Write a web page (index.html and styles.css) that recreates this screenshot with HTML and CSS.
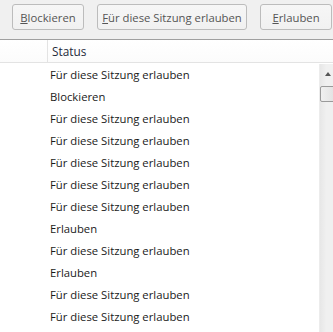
FILE: index.html
```html
<!DOCTYPE html>
<html lang="de">
<head>
  <meta charset="UTF-8">
  <title>Ausnahmen</title>
  <link rel="stylesheet" href="styles.css">
</head>
<body>
  <div class="toolbar">
    <button class="btn btn-short"><u>B</u>lockieren</button>
    <button class="btn btn-wide"><u>F</u>ür diese Sitzung erlauben</button>
    <button class="btn btn-short"><u>E</u>rlauben</button>
  </div>

  <div class="table">
    <div class="table-head">
      <div class="col-site"></div>
      <div class="col-status">Status</div>
    </div>
    <div class="table-body">
      <ul class="rows">
        <li>Für diese Sitzung erlauben</li>
        <li>Blockieren</li>
        <li>Für diese Sitzung erlauben</li>
        <li>Für diese Sitzung erlauben</li>
        <li>Für diese Sitzung erlauben</li>
        <li>Für diese Sitzung erlauben</li>
        <li>Für diese Sitzung erlauben</li>
        <li>Erlauben</li>
        <li>Für diese Sitzung erlauben</li>
        <li>Erlauben</li>
        <li>Für diese Sitzung erlauben</li>
        <li>Für diese Sitzung erlauben</li>
      </ul>
      <div class="scrollbar">
        <div class="arrow-up"></div>
        <div class="thumb"></div>
      </div>
    </div>
  </div>
</body>
</html>
```

FILE: styles.css
```css
* {
  margin: 0;
  padding: 0;
  box-sizing: border-box;
}

html, body {
  overflow: hidden;
}

body {
  font-family: 'Open Sans', 'Noto Sans', sans-serif;
  font-size: 11.3px;
  color: #1a1a1a;
  background: white;
}

.toolbar {
  display: flex;
  gap: 13px;
  height: 40px;
  padding: 4px 0 0 12px;
  background: #f0f0f0;
  border-bottom: 1px solid #a0a0a0;
}

.btn {
  height: 26px;
  padding: 0;
  border: 1px solid #bcbcbc;
  border-radius: 3px;
  background: linear-gradient(#f6f6f6, #f1f1f1);
  color: #555;
  font-family: inherit;
  font-size: 11.3px;
  white-space: nowrap;
}

.btn-short {
  width: 72px;
}

.btn-wide {
  width: 150px;
}

.table {
  width: 336px;
}

.table-head {
  display: flex;
  height: 23px;
  border-bottom: 1px solid #e3e3e3;
  background: linear-gradient(#fff, #fbfbfb);
}

.col-site {
  width: 48px;
  border-right: 1px solid #e3e3e3;
}

.col-status {
  padding: 3px 0 0 4px;
  font-size: 11.8px;
  color: #1e2a3a;
}

.table-body {
  display: flex;
  height: 270px;
  padding-top: 1px;
}

.rows {
  flex: 1;
  list-style: none;
  padding-left: 50px;
}

.rows li {
  height: 22px;
  line-height: 22px;
}

.scrollbar {
  width: 17px;
  background: linear-gradient(90deg, #e7e7e7, #f0f0f0 40%, #f0f0f0);
  border-left: 1px solid #ececec;
}

.arrow-up {
  height: 22px;
  position: relative;
}

.arrow-up::after {
  content: '';
  position: absolute;
  left: 5px;
  top: 8px;
  border-left: 3px solid transparent;
  border-right: 3px solid transparent;
  border-bottom: 4px solid #555;
}

.thumb {
  height: 16px;
  border: 1px solid #9a9a9a;
  border-radius: 2px;
  background: linear-gradient(90deg, #f0f0f0, #e2e2e2);
}
```
